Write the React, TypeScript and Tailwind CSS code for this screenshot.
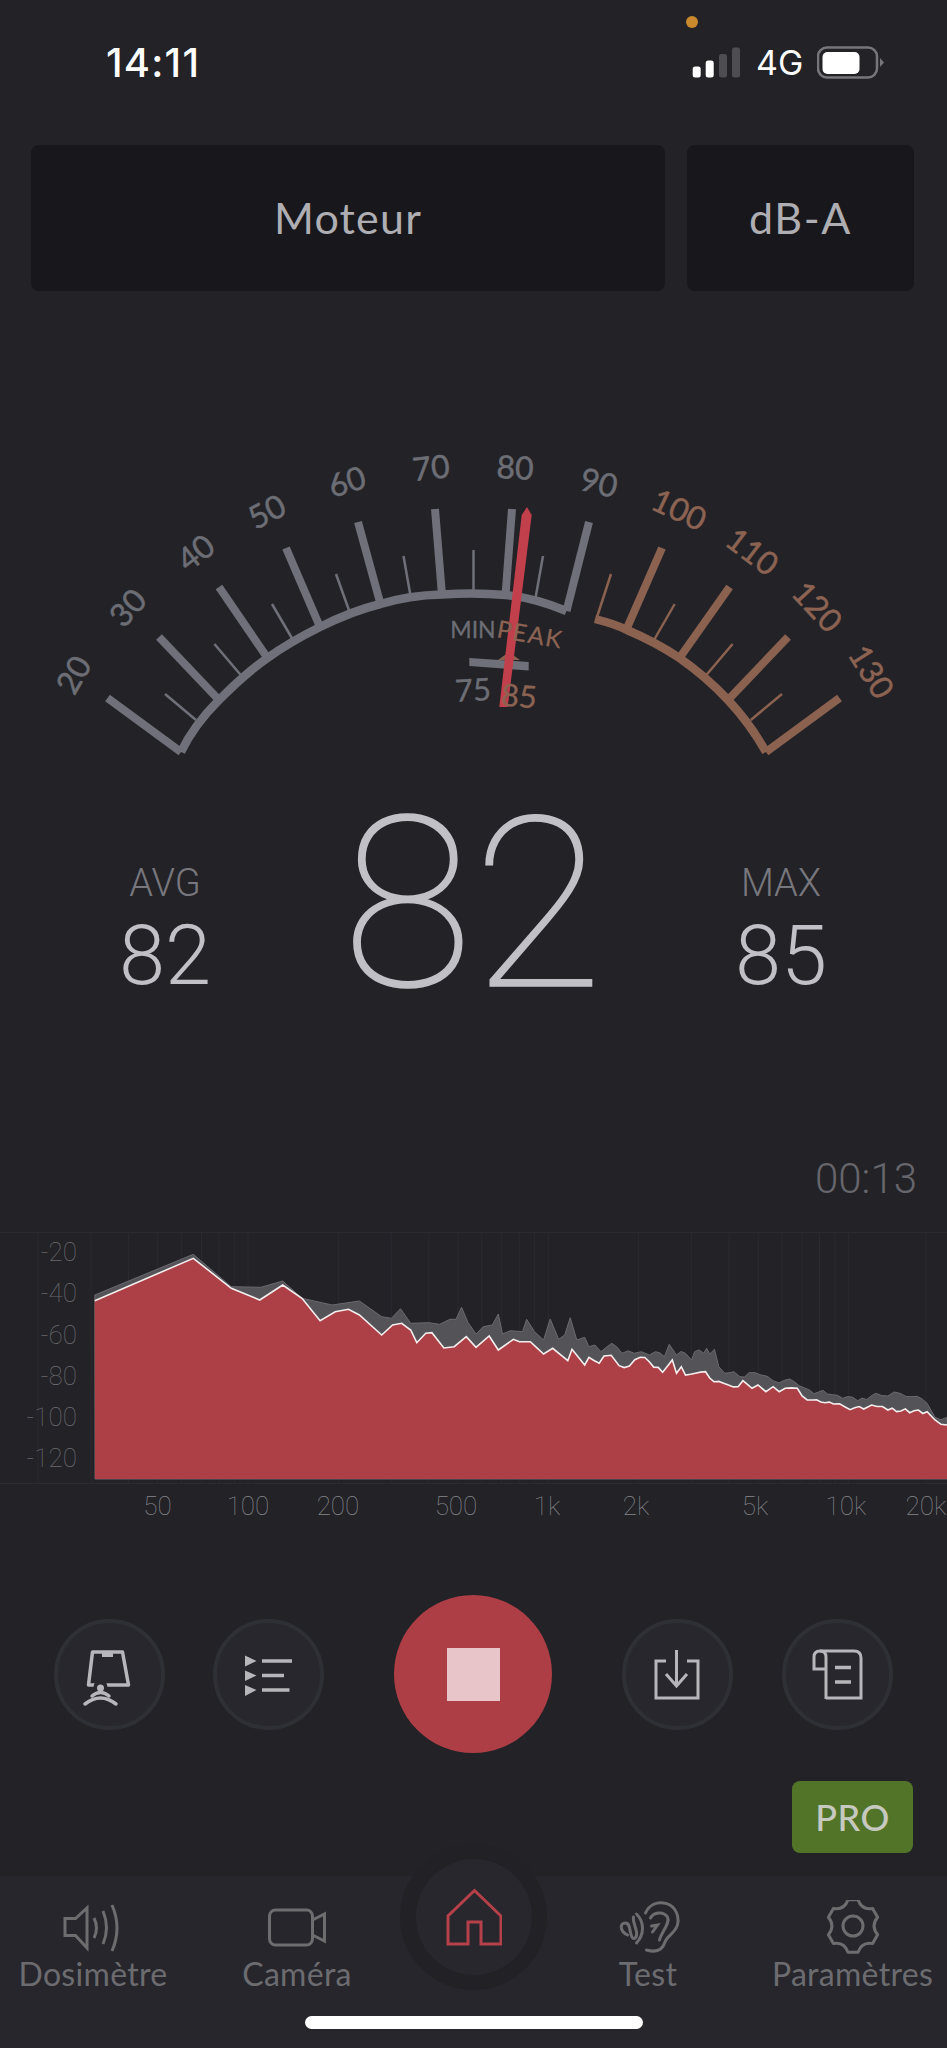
const GRAY = '#6f7079'
const BROWN = '#8b6250'
const LABEL_GRAY = '#6d6e75'
const LABEL_BROWN = '#8c6352'
const FONT = '"Lato", "Open Sans", sans-serif'
const NUM_FONT = 'Roboto, sans-serif'

type Line = [number, number, number, number]

const grayMajor: Line[] = [
  [107.5, 698, 181, 752], [159, 637, 219, 700], [219, 587, 267.5, 658], [286, 548, 320, 627],
  [358, 522, 380.5, 604], [435, 509, 442, 595], [512, 509, 505.5, 595], [589, 522, 566.5, 611],
]
const brownMajor: Line[] = [
  [662, 548, 627, 628], [729.6, 587, 679.5, 658], [788, 637, 728, 700], [839.5, 698, 766, 752],
]
const grayMinor: Line[] = [
  [165, 694, 196, 720], [214.4, 644, 241.6, 676], [272, 604, 293, 640], [336, 574, 350, 613],
  [403.5, 556, 410.7, 597], [473.5, 550, 473.5, 592], [543, 556, 535.7, 597],
]
const brownMinor: Line[] = [
  [611, 574, 597, 617], [674.7, 604, 654, 640], [732.6, 644, 705.5, 676], [782, 694, 750.8, 720],
]
const scaleLabels: [string, number, number, number, string][] = [
  ['20', 74, 675, -60, LABEL_GRAY], ['30', 128, 608, -48, LABEL_GRAY], ['40', 196, 553, -38, LABEL_GRAY],
  ['50', 267, 512, -27, LABEL_GRAY], ['60', 347, 482, -17, LABEL_GRAY], ['70', 431, 468, -6, LABEL_GRAY],
  ['80', 515, 468, 3, LABEL_GRAY], ['90', 599, 483, 14, LABEL_GRAY], ['100', 679, 510, 25, LABEL_BROWN],
  ['110', 752, 552, 37, LABEL_BROWN], ['120', 817, 607, 47, LABEL_BROWN], ['130', 871, 672, 58, LABEL_BROWN],
]

function Gauge() {
  return (
    <svg width="947" height="360" viewBox="0 420 947 360" className="block" style={{ fontFamily: FONT }}>
      <path
        d="M181 752 C190 733 203 716 219 700 C235 684 250 670 267.5 658 C284 646 302 636 320 627 C340 617 360 609 380.5 604 C400 598 421 595 442 594.5 C463 593 484 593 505.5 595 C527 597 547 603 566.5 611"
        fill="none"
        stroke={GRAY}
        strokeWidth="8.5"
      />
      <path
        d="M595 619 C607 622 617 625 627 630 C646 638 663 647 679.5 658 C698 671 714 685 728 700 C744 717 756 734 766 752"
        fill="none"
        stroke={BROWN}
        strokeWidth="8.5"
      />
      {grayMajor.map((l, i) => (
        <line key={i} x1={l[0]} y1={l[1]} x2={l[2]} y2={l[3]} stroke={GRAY} strokeWidth="8" />
      ))}
      {brownMajor.map((l, i) => (
        <line key={i} x1={l[0]} y1={l[1]} x2={l[2]} y2={l[3]} stroke={BROWN} strokeWidth="8" />
      ))}
      {grayMinor.map((l, i) => (
        <line key={i} x1={l[0]} y1={l[1]} x2={l[2]} y2={l[3]} stroke={GRAY} strokeWidth="2.5" />
      ))}
      {brownMinor.map((l, i) => (
        <line key={i} x1={l[0]} y1={l[1]} x2={l[2]} y2={l[3]} stroke={BROWN} strokeWidth="2.5" />
      ))}
      {scaleLabels.map(([t, x, y, r, c]) => (
        <text key={t} x={x} y={y + 11} fontSize="32" fill={c} stroke={c} strokeWidth="0.5" textAnchor="middle" transform={`rotate(${r} ${x} ${y})`}>
          {t}
        </text>
      ))}
      <text x="473" y="638" fontSize="23" fill={LABEL_GRAY} stroke={LABEL_GRAY} strokeWidth="0.3" textAnchor="middle">MIN</text>
      <polygon points="509,652 498,660 520,660" fill={BROWN} />
      <polygon points="469.3,658 528.7,662 528.7,670.5 469.3,666" fill={GRAY} />
      <text x="473" y="701" fontSize="31" fill={LABEL_GRAY} stroke={LABEL_GRAY} strokeWidth="0.3" textAnchor="middle" transform="rotate(-3 473 690)">75</text>
      <polygon points="527,507 531.7,515 507.7,707 499.3,707 521.7,515" fill="#c23f4c" />
      <text x="530" y="643" fontSize="24" letterSpacing="1.5" fill={LABEL_BROWN} stroke={LABEL_BROWN} strokeWidth="0.3" textAnchor="middle" transform="rotate(10 530 635)">PEAK</text>
      <text x="519" y="707" fontSize="31" fill={LABEL_BROWN} stroke={LABEL_BROWN} strokeWidth="0.3" textAnchor="middle" transform="rotate(5 519 696)">85</text>
    </svg>
  )
}

const redCurve = '157,272 320,145 383,235 430,270 468,225 500,265 530,332 555,305 577,298 595,315 632,375 650,345 665,340 680,360 690,398 705,370 715,368 735,414 752,410 772,380 788,412 810,378 825,420 850,388 860,395 878,395 888,412 900,432 915,415 940,452 947,418 968,465 975,442 992,460 1000,438 1012,436 1025,467 1042,468 1060,442 1075,455 1097,487 1113,450 1120,490 1128,470 1135,495 1168,485 1182,515 1222,530 1230,512 1245,535 1255,525 1268,545 1280,530 1290,545 1300,535 1320,535 1328,558 1345,570 1380,582 1400,592 1430,597 1443,585 1470,600 1535,605 1548,630 1568,645'
const maxCurve = '157,255 320,133 383,230 432,232 468,213 500,265 550,285 595,273 632,320 648,325 663,296 680,340 710,338 728,343 745,328 755,328 764,292 775,338 788,372 800,350 815,345 825,312 832,372 845,362 865,365 872,328 885,365 900,390 911,327 925,388 935,375 944,323 955,390 968,382 975,410 985,405 995,425 1013,400 1030,430 1050,430 1062,425 1075,435 1085,425 1100,440 1108,403 1120,435 1135,430 1145,450 1150,425 1165,430 1170,415 1175,432 1183,418 1190,470 1200,490 1215,485 1225,500 1240,488 1260,495 1280,512 1300,510 1315,515 1340,540 1370,552 1395,565 1420,572 1450,550 1470,558 1490,550 1510,560 1535,580 1548,622 1568,622'

// crop coords -> page coords, high end gets some fine jitter
const toPage = (s: string, amp: number) => {
  const pts = s.split(' ').map((p) => p.split(',').map(Number))
  const out: string[] = []
  pts.forEach(([x, y], i) => {
    out.push(`${(x * 0.604).toFixed(1)},${(1210 + y / 3).toFixed(1)}`)
    const next = pts[i + 1]
    if (!next || x < 960 || next[0] - x < 8) return
    const n = Math.floor((next[0] - x) / 7)
    for (let k = 1; k < n; k++) {
      const t = k / n
      const jx = x + (next[0] - x) * t
      const jy = y + (next[1] - y) * t + Math.sin(jx * 2.3) * amp
      out.push(`${(jx * 0.604).toFixed(1)},${(1210 + jy / 3).toFixed(1)}`)
    }
  })
  return out.join(' ')
}

const gridX = [
  20, 30, 40, 50, 60, 70, 80, 90, 100, 200, 300, 400, 500, 600, 700, 800, 900, 1000, 2000, 3000, 4000, 5000, 6000, 7000,
  8000, 9000, 10000, 20000,
]
const yTicks: [string, number][] = [['-20', 1252], ['-40', 1293], ['-60', 1335], ['-80', 1376], ['-100', 1417], ['-120', 1458]]
const xTicks: [string, number][] = [['50', 157.6], ['100', 248], ['200', 338], ['500', 456], ['1k', 547], ['2k', 636], ['5k', 755], ['10k', 846], ['20k', 926]]

function Spectrum() {
  const red = toPage(redCurve, 6)
  const max = toPage(maxCurve, 8)
  return (
    <svg width="947" height="300" viewBox="0 1230 947 300" className="block" style={{ fontFamily: NUM_FONT }}>
      <line x1="0" y1="1232.5" x2="947" y2="1232.5" stroke="#2b2b30" />
      <line x1="0" y1="1483.5" x2="947" y2="1483.5" stroke="#2b2b30" />
      {gridX.map((f) => {
        const x = Math.min(157.6 + Math.log2(f / 50) * 90.4, 926)
        return <line key={f} x1={x} y1="1232" x2={x} y2="1483" stroke="#2a2a2f" />
      })}
      <polygon points={`${max} 947,1479 95,1479`} fill="#535358" stroke="#6a6a6f" strokeWidth="1" />
      <polygon points={`${red} 947,1479 95,1479`} fill="#ad3f46" />
      <polyline points={red} fill="none" stroke="#f4eeee" strokeWidth="1.6" />
      {yTicks.map(([t, y]) => (
        <text key={t} x="77" y={y + 9} fontSize="26" fontWeight="100" fill="#6a6a6f" textAnchor="end">{t}</text>
      ))}
      {xTicks.map(([t, x]) => (
        <text key={t} x={x} y="1515" fontSize="26" fontWeight="100" fill="#85858a" textAnchor="middle">{t}</text>
      ))}
    </svg>
  )
}

function RoundButton({ children, className = '' }: { children: React.ReactNode; className?: string }) {
  return (
    <div className={`w-[111px] h-[111px] rounded-full bg-[#27272d] border-[4px] border-[#2f3035] box-border overflow-hidden ${className}`}>
      <svg width="103" height="103" viewBox="4 4 103 103" fill="none" stroke="#b6b6bb" strokeWidth="3" className="block">
        {children}
      </svg>
    </div>
  )
}

function NavItem({ label, children }: { label: string; children?: React.ReactNode }) {
  return (
    <div className="flex flex-col items-center">
      <div className="h-[56px]">{children}</div>
      <div className="text-[32px] leading-[36px] text-[#6c6c70] tracking-[0.3px] whitespace-nowrap">{label}</div>
    </div>
  )
}

// six lobed gear outline around the tab icon centre
function gearPath(cx: number, cy: number) {
  const pt = (r: number, deg: number) => {
    const a = (deg * Math.PI) / 180
    return `${(cx + r * Math.cos(a)).toFixed(1)} ${(cy + r * 1.03 * Math.sin(a)).toFixed(1)}`
  }
  let d = ''
  for (let i = 0; i < 6; i++) {
    const a = -90 + i * 60
    const head = i === 0 ? `M${pt(26, a - 11)}` : `Q${pt(17.5, a - 30)} ${pt(26, a - 11)}`
    d += `${head} L${pt(26, a + 11)} `
  }
  d += `Q${pt(17.5, -120)} ${pt(26, -101)} Z`
  return d
}

export default function App() {
  return (
    <div className="w-[947px] h-[2048px] bg-[#222227] flex flex-col overflow-hidden relative" style={{ fontFamily: FONT }}>
      {/* status bar */}
      <div className="h-[145px] relative shrink-0" style={{ fontFamily: 'Inter, sans-serif' }}>
        <div className="absolute left-[686px] top-[16px] w-[12px] h-[12px] rounded-full bg-[#c98a2e]" />
        <div className="flex items-center h-[32px] mt-[47px] pl-[106px] text-white">
          <div className="text-[40px] font-medium leading-none w-[586px] tracking-[1.2px]">14:11</div>
          <svg width="49" height="32" viewBox="692 47 49 32" className="block">
            <rect x="692.7" y="66.5" width="8" height="11" rx="2.5" fill="#fff" />
            <rect x="705.7" y="60.5" width="8" height="17" rx="2.5" fill="#fff" />
            <rect x="719" y="54" width="8" height="23.5" rx="2.5" fill="#4d4d52" />
            <rect x="732" y="47.5" width="8" height="30" rx="2.5" fill="#4d4d52" />
          </svg>
          <div className="text-[34px] leading-none ml-[15px] w-[61px]">4G</div>
          <svg width="68" height="34" viewBox="816 46 68 34" className="block">
            <rect x="817" y="47.5" width="59" height="30" rx="9" fill="none" stroke="#77777b" strokeWidth="2.5" />
            <rect x="821.5" y="52" width="37" height="22" rx="5" fill="#fff" />
            <path d="M879 58 L883 62.5 L879 67 Z" fill="#77777b" />
          </svg>
        </div>
      </div>

      {/* mode cards */}
      <div className="flex gap-[22px] pl-[31px] h-[146px] shrink-0">
        <div className="w-[634px] rounded-[8px] bg-[#18181c] flex items-center justify-center text-[43px] text-[#aeaeb3] tracking-[1.2px]">Moteur</div>
        <div className="w-[227px] rounded-[8px] bg-[#18181c] flex items-center justify-center text-[43px] text-[#aeaeb3] tracking-[1.6px]">dB-A</div>
      </div>

      <div className="mt-[129px] shrink-0">
        <Gauge />
      </div>

      {/* readout */}
      <div className="grid grid-cols-[330px_285px_332px] h-[240px] shrink-0 text-[#c0c0c6]" style={{ fontFamily: NUM_FONT }}>
        <div className="flex flex-col items-center pt-[83px]">
          <div className="text-[38px] leading-[40px] font-light text-[#77777d]">AVG</div>
          <div className="mt-[16px] text-[83px] leading-[74px] font-light">82</div>
        </div>
        <div className="mt-[5px] text-[238px] leading-[240px] font-thin text-center [-webkit-text-stroke:1.5px_#c0c0c6]">82</div>
        <div className="flex flex-col items-center pt-[83px]">
          <div className="text-[38px] leading-[40px] font-light text-[#77777d]">MAX</div>
          <div className="mt-[16px] text-[83px] leading-[74px] font-light">85</div>
        </div>
      </div>

      <div className="h-[210px] shrink-0 flex items-end justify-end pr-[30px] pb-[29px] text-[42px] leading-[44px] font-light text-[#66666c]" style={{ fontFamily: NUM_FONT }}>
        00:13
      </div>

      <Spectrum />

      {/* controls */}
      <div className="flex items-center pl-[54px] h-[158px] mt-[65px] shrink-0">
        <RoundButton>
          <path d="M38.5 33 H68.5 L74.5 66 H34.5 Z" strokeWidth="3.5" strokeLinejoin="round" />
          <path d="M48 33 H59 V38 H48 Z" fill="#b6b6bb" stroke="none" />
          <circle cx="46.5" cy="68" r="7" fill="#27272d" stroke="none" />
          <circle cx="46.5" cy="69" r="3.5" fill="#b6b6bb" stroke="none" />
          <path d="M38 77 Q46.5 70 55 77" strokeWidth="3.5" strokeLinecap="round" />
          <path d="M31 85 Q46.5 73 62 85" strokeWidth="3.5" strokeLinecap="round" />
        </RoundButton>
        <RoundButton className="ml-[48px]">
          <path d="M32 36.5 L43.5 42 L32 47.5 Z M32 51.5 L43.5 56.5 L32 62 Z M32 66 L43.5 71 L32 77 Z" fill="#b6b6bb" stroke="none" />
          <path d="M49 42 H79 M49 56.5 H71 M49 71 H76.5" strokeWidth="3.5" />
        </RoundButton>
        <div className="ml-[70px] w-[158px] h-[158px] rounded-full bg-[#ad3e45] flex items-center justify-center">
          <div className="w-[53px] h-[53px] bg-[#e8c5c9]" />
        </div>
        <RoundButton className="ml-[70px]">
          <path d="M44 42 H34 V79 H76 V42 H65" />
          <path d="M54.5 31 V67 M44 55 L54.5 67 L65 55" />
        </RoundButton>
        <RoundButton className="ml-[49px]">
          <path d="M44 80 V38 Q44 32 38 32 Q32 32 32 38 V50 H44" />
          <path d="M38 32 H72 Q79 32 79 39 V79 H44" />
          <path d="M53 48.5 H69 M53 63 H69" strokeWidth="3.5" />
        </RoundButton>
      </div>

      <div className="flex justify-end pr-[34px] mt-[28px] shrink-0">
        <div className="w-[121px] h-[72px] rounded-[8px] bg-[#527428] flex items-center justify-center text-[36px] font-medium text-[#c6c9c0] tracking-[0.5px]">PRO</div>
      </div>

      {/* tab bar */}
      <div className="mt-[23px] flex-1 bg-[#26262c] relative pt-[24px]">
        <div className="absolute left-[400px] top-[-32px] w-[147px] h-[146px] rounded-full bg-[#222226] flex items-center justify-center">
          <div className="w-[116px] h-[116px] rounded-full bg-[#27272d] flex items-center justify-center">
            <svg width="56" height="58" viewBox="445 1889 56 58" fill="none" stroke="#b5404a" strokeWidth="3" className="block">
              <path d="M447 1945 V1917 L473.5 1891.5 L500 1917 V1945 H480 V1923 H467 V1945 Z" />
            </svg>
          </div>
        </div>
        <div className="grid grid-cols-[186px_222px_130px_220px_189px]">
          <NavItem label="Dosimètre">
            <svg width="64" height="56" viewBox="61 1900 64 56" fill="none" stroke="#6d6d70" strokeWidth="3" className="block">
              <path d="M65 1918.5 H75.5 L87 1908 V1948 L75.5 1935.5 H65 Z" />
              <path d="M94 1918 Q99 1928 94 1938 M103 1911 Q110 1928 103 1944 M112 1905 Q122 1928 112 1951" />
            </svg>
          </NavItem>
          <NavItem label="Caméra">
            <svg width="64" height="56" viewBox="265.5 1900 64 56" fill="none" stroke="#6d6d70" strokeWidth="3" className="block">
              <rect x="270" y="1910" width="43" height="35" rx="6" />
              <path d="M313 1920 L325 1914 V1941 L313 1935" />
            </svg>
          </NavItem>
          <NavItem label="" />
          <NavItem label="Test">
            <svg width="64" height="56" viewBox="616.5 1900 64 56" fill="none" stroke="#6d6d70" strokeWidth="3" strokeLinecap="round" className="block">
              <path d="M646 1913 C650 1904 658 1902 664 1903 C674 1904 679 1913 678.5 1922 C678 1932 668 1935 665.5 1942 C663 1950 657 1953 647 1950" />
              <path d="M651 1918 C654 1912 664 1911 668 1917 C671 1923 662 1932 660 1940" />
              <path d="M652 1926 L658 1925 L653 1932" />
              <path d="M628 1935 C620 1931 620 1923 626 1923 C631 1923 630 1932 632 1936 C634 1941 638 1938 637 1932 C636 1926 633 1921 634 1917" />
              <path d="M637 1914 C645 1922 645 1934 637 1943" />
            </svg>
          </NavItem>
          <NavItem label="Paramètres">
            <svg width="64" height="56" viewBox="823 1900 64 56" fill="none" stroke="#6d6d70" strokeWidth="3" strokeLinejoin="round" className="block">
              <circle cx="855" cy="1926" r="10" />
              <path d={gearPath(855, 1926)} />
            </svg>
          </NavItem>
        </div>
        <div className="absolute left-[305px] bottom-[19px] w-[338px] h-[13px] rounded-full bg-white" />
      </div>
    </div>
  )
}
